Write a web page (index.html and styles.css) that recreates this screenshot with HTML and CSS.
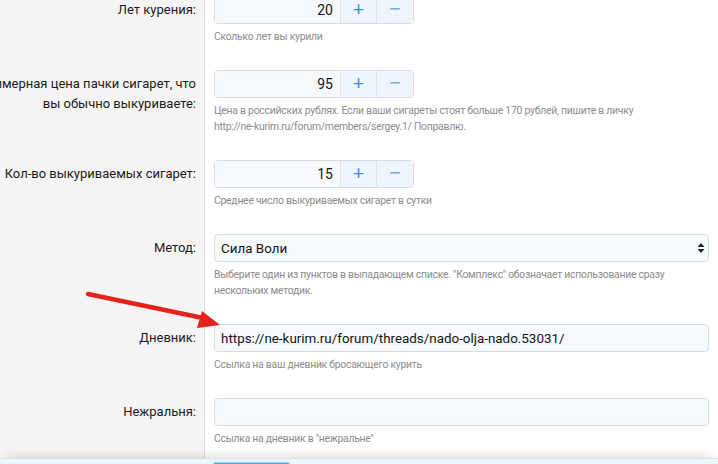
FILE: index.html
```html
<!DOCTYPE html>
<html>
<head>
  <meta charset="utf-8">
  <link rel="stylesheet" href="styles.css">
</head>
<body>
  <div class="page">
    <form class="block-form">
      <dl class="form-row">
        <dt>Лет курения:</dt>
        <dd>
          <div class="spinbox">
            <input type="text" class="spin-input" value="20">
            <button type="button" class="spin-btn up">+</button>
            <button type="button" class="spin-btn down">&minus;</button>
          </div>
          <div class="explain">Сколько лет вы курили</div>
        </dd>
      </dl>
      <dl class="form-row">
        <dt>Примерная цена пачки сигарет, что<br>вы обычно выкуриваете:</dt>
        <dd>
          <div class="spinbox">
            <input type="text" class="spin-input" value="95">
            <button type="button" class="spin-btn up">+</button>
            <button type="button" class="spin-btn down">&minus;</button>
          </div>
          <div class="explain">Цена в российских рублях. Если ваши сигареты стоят больше 170 рублей, пишите в личку<br>http://ne-kurim.ru/forum/members/sergey.1/ Поправлю.</div>
        </dd>
      </dl>
      <dl class="form-row">
        <dt>Кол-во выкуриваемых сигарет:</dt>
        <dd>
          <div class="spinbox">
            <input type="text" class="spin-input" value="15">
            <button type="button" class="spin-btn up">+</button>
            <button type="button" class="spin-btn down">&minus;</button>
          </div>
          <div class="explain">Среднее число выкуриваемых сигарет в сутки</div>
        </dd>
      </dl>
      <dl class="form-row">
        <dt>Метод:</dt>
        <dd>
          <div class="select-wrap">
            <select class="input">
              <option>Сила Воли</option>
            </select>
            <svg class="select-arrow" width="8" height="12" viewBox="0 0 8 12">
              <path d="M4 1 L7.5 5 L0.5 5 Z M4 11 L7.5 7 L0.5 7 Z" fill="#222"/>
            </svg>
          </div>
          <div class="explain">Выберите один из пунктов в выпадающем списке. "Комплекс" обозначает использование сразу<br>нескольких методик.</div>
        </dd>
      </dl>
      <dl class="form-row">
        <dt>Дневник:</dt>
        <dd>
          <input type="text" class="input" value="https://ne-kurim.ru/forum/threads/nado-olja-nado.53031/">
          <div class="explain">Ссылка на ваш дневник бросающего курить</div>
        </dd>
      </dl>
      <dl class="form-row last">
        <dt>Нежральня:</dt>
        <dd>
          <input type="text" class="input" value="">
          <div class="explain">Ссылка на дневник в "нежральне"</div>
        </dd>
      </dl>
    </form>
    <div class="form-footer">
      <button type="button" class="button-primary">Сохранить</button>
    </div>

    <svg class="annotation" width="718" height="464" viewBox="0 0 718 464">
      <line x1="88" y1="294" x2="203" y2="318" stroke="#e8221b" stroke-width="4.5" stroke-linecap="round"/>
      <path d="M220 325 L197 328 L202 311 Z" fill="#e8221b"/>
    </svg>
  </div>
</body>
</html>
```

FILE: styles.css
```css
html, body {
  margin: 0;
  height: 100%;
  overflow: hidden;
}

body {
  font-family: Roboto, "Noto Sans", sans-serif;
  color: #141414;
  background: #fff;
}

.page {
  position: relative;
  height: 464px;
  overflow: hidden;
}

.block-form {
  margin-top: -16px;
  margin-left: -80px;
}

.form-row {
  display: flex;
  margin: 0;
}

.form-row dt {
  width: 284px;
  flex: none;
  box-sizing: border-box;
  background: #f5f5f5;
  text-align: right;
  padding: 16px 8px 0 0;
  font-size: 13px;
  line-height: 20px;
  white-space: nowrap;
  color: #1a1a1a;
}

.form-row dd {
  flex: 1;
  margin: 0;
  border-left: 1px solid #dfdfdf;
  padding: 12px 9px 13px 9px;
}

.form-row.last dd {
  padding-bottom: 11px;
}

.spinbox {
  display: flex;
  width: 200px;
  height: 28px;
  box-sizing: border-box;
  border: 1px solid #d8dde3;
  border-radius: 4px;
  overflow: hidden;
}

.spin-input {
  flex: 1;
  min-width: 0;
  border: 0;
  background: #f7fafd;
  text-align: right;
  padding: 0 7px 0 6px;
  font: 14px Roboto, sans-serif;
  color: #141414;
}

.spin-btn {
  width: 36px;
  border: 0;
  border-left: 1px solid #dde4ec;
  background: #eef5fc;
  color: #3d8fd7;
  font: 20px/1 "Noto Sans", sans-serif;
  padding: 0 0 2px;
}

.spin-btn.down {
  width: 37px;
  color: #7fa8d3;
}

.input {
  display: block;
  width: 100%;
  height: 28px;
  box-sizing: border-box;
  border: 1px solid #d8dde3;
  border-radius: 4px;
  background: #f7fafd;
  padding: 0 6px;
  font: 13.4px Roboto, sans-serif;
  color: #141414;
}

.select-wrap {
  position: relative;
}

select.input {
  appearance: none;
  -webkit-appearance: none;
}

.select-arrow {
  position: absolute;
  right: 4px;
  top: 8px;
}

.explain {
  margin-top: 5px;
  font-size: 10.4px;
  letter-spacing: -0.25px;
  line-height: 16px;
  color: #8c8c8c;
  white-space: nowrap;
}

.form-footer {
  position: relative;
  height: 20px;
  background: #edf6fd;
  border-top: 1px solid #d5e3ef;
  box-shadow: 0 -6px 12px -6px rgba(0, 0, 0, 0.18);
  padding: 3px 0 0 213px;
}

.button-primary {
  display: block;
  width: 77px;
  height: 30px;
  border: 0;
  border-top: 1px solid #9fd3ee;
  border-radius: 3px;
  background: #47a7eb;
  color: #fff;
}

.annotation {
  position: absolute;
  left: 0;
  top: 0;
  pointer-events: none;
}
```
